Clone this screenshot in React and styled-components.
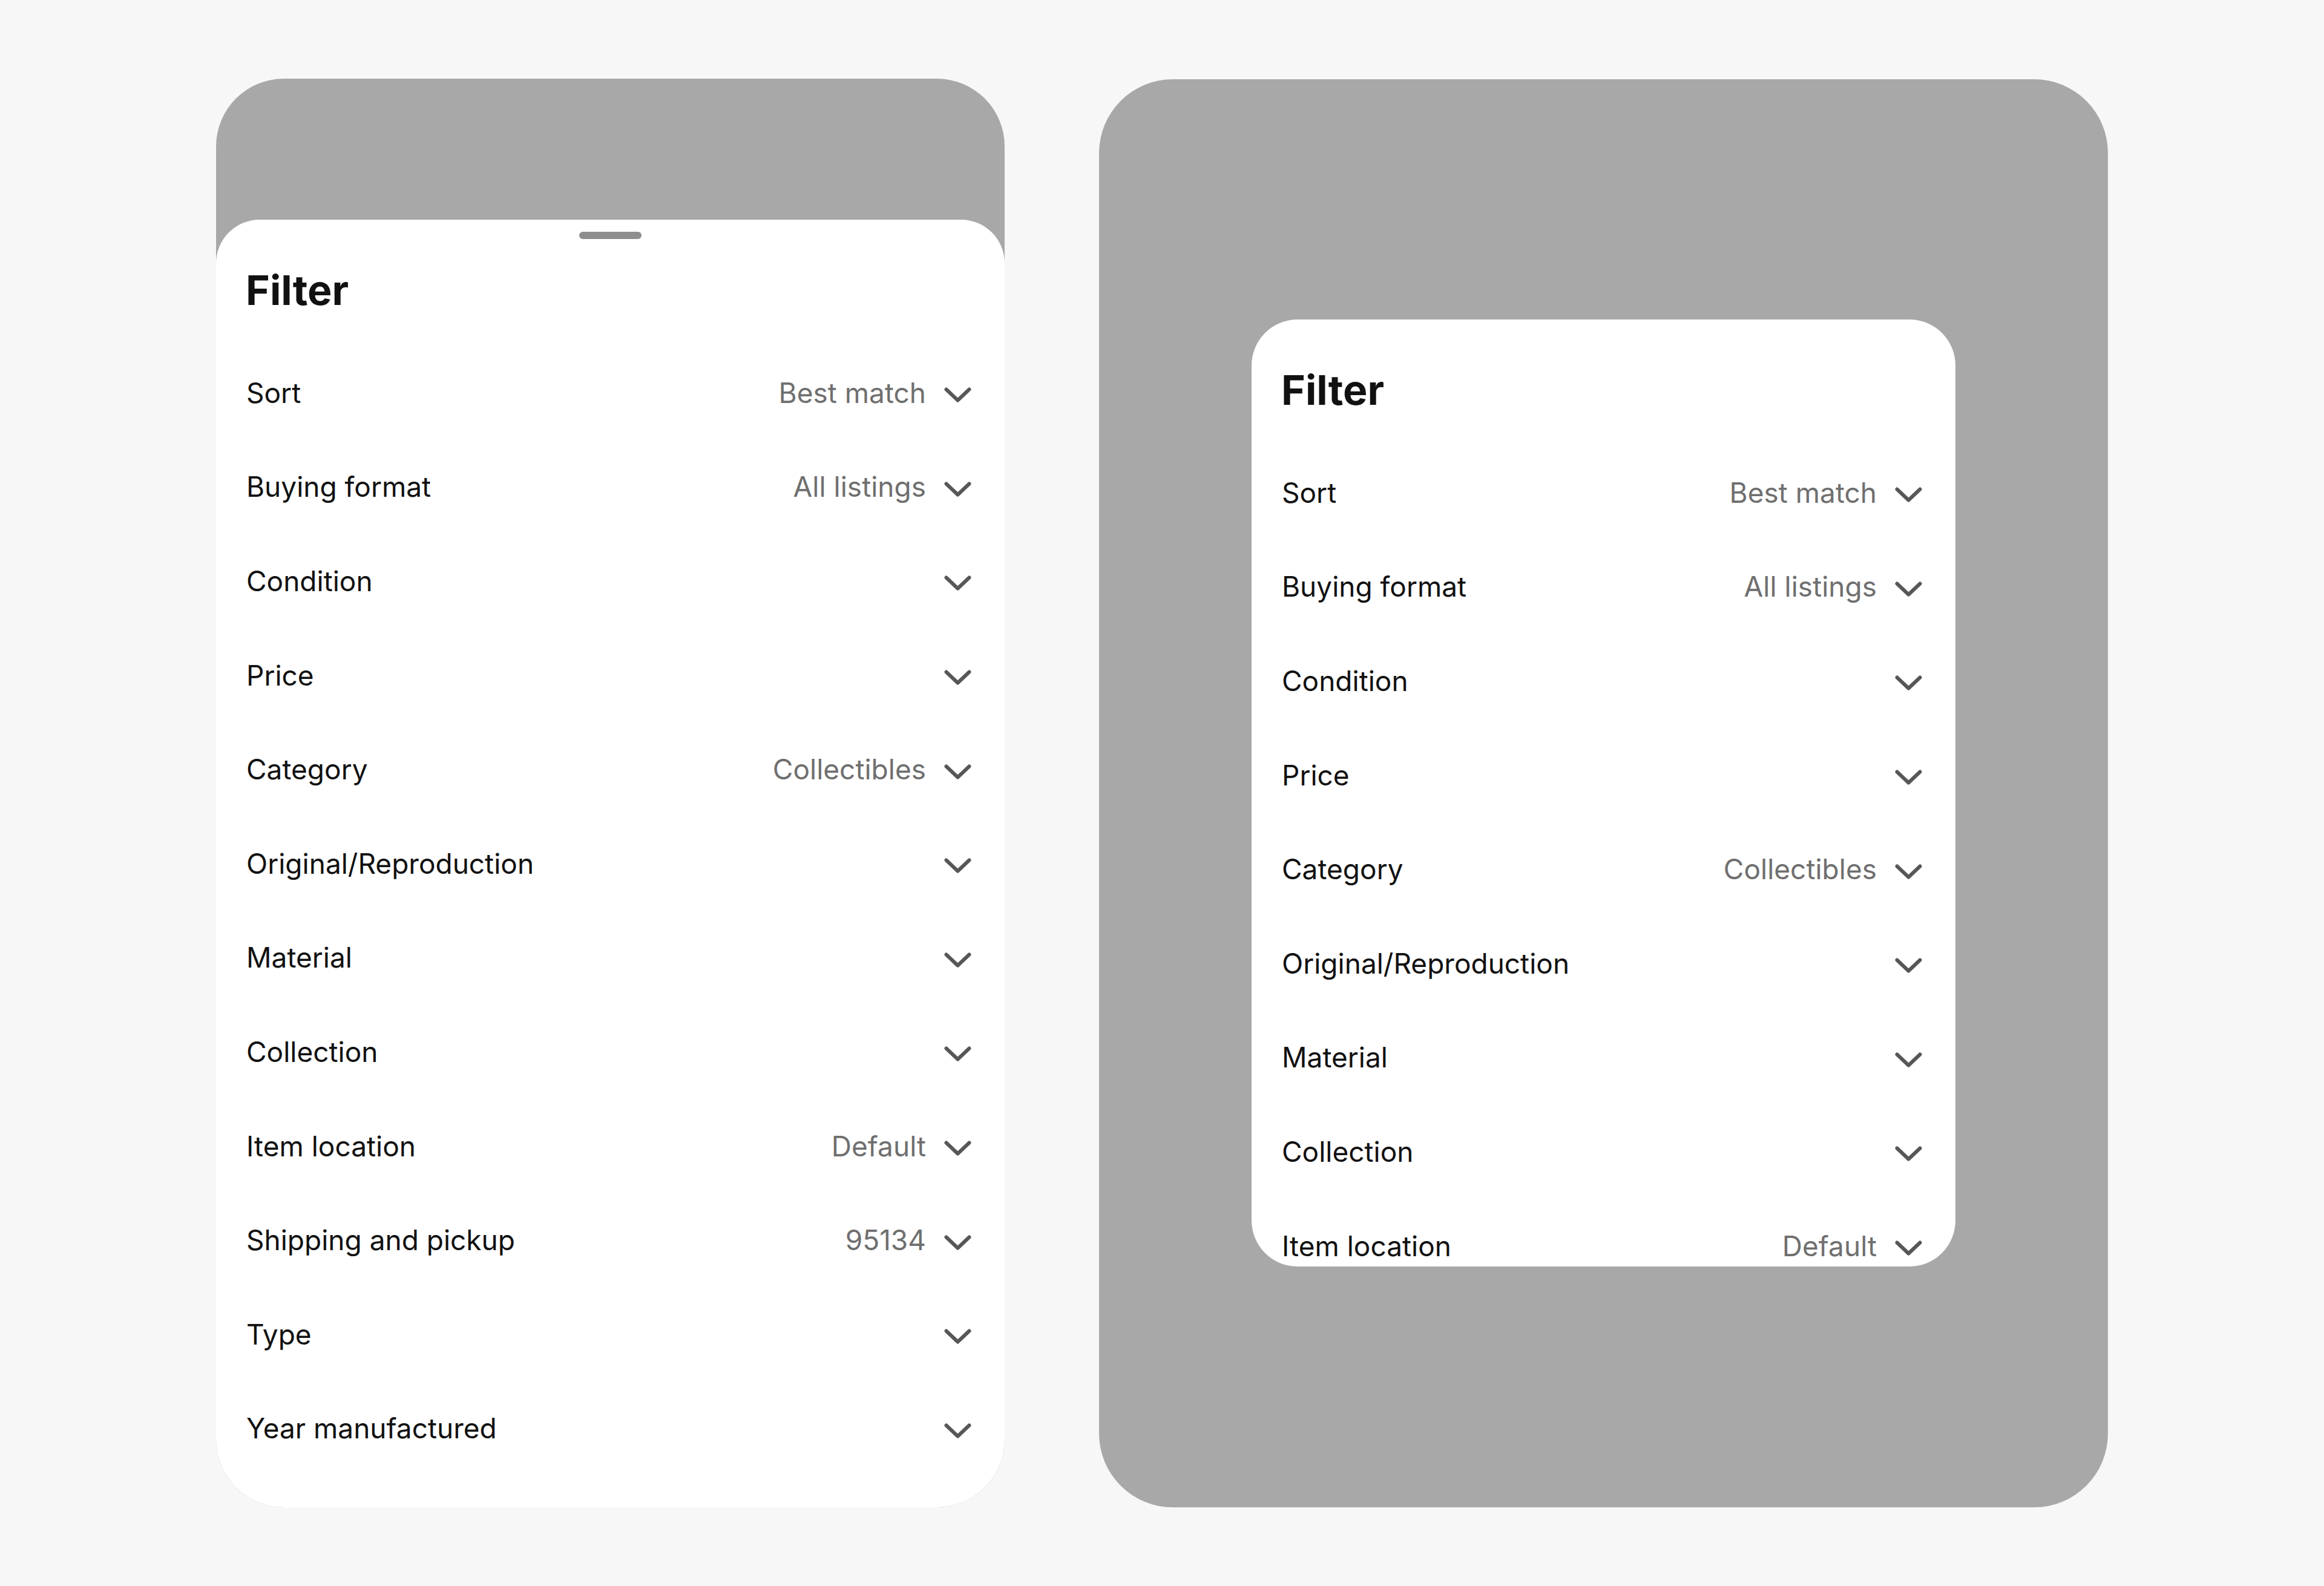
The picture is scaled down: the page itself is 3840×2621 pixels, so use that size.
import React from "react";
import styled, { createGlobalStyle } from "styled-components";

const GlobalStyle = createGlobalStyle`
  html, body {
    margin: 0;
    padding: 0;
    background: #f7f7f7;
  }
  body {
    font-family: Inter, "Noto Sans", "Liberation Sans", sans-serif;
    color: #111111;
    -webkit-font-smoothing: antialiased;
  }
  * { box-sizing: border-box; }
`;

const Stage = styled.main`
  display: flex;
  justify-content: center;
  align-items: center;
  gap: 156px;
  height: 2621px;
`;

const Phone = styled.section`
  width: 1303px;
  height: 2361px;
  border-radius: 112px;
  background: #a8a8a8;
  overflow: hidden;
  display: flex;
  flex-direction: column;
  padding-top: 233px;
`;

const Tablet = styled.section`
  width: 1667px;
  height: 2360px;
  border-radius: 122px;
  background: #a8a8a8;
  display: flex;
  align-items: center;
  justify-content: center;
`;

const Sheet = styled.div`
  flex: 1;
  background: #ffffff;
  border-radius: 72px 72px 0 0;
  display: flex;
  flex-direction: column;
`;

const Dialog = styled.div`
  width: 1163px;
  height: 1565px;
  background: #ffffff;
  border-radius: 76px;
  overflow: hidden;
  padding-top: 76px;
  display: flex;
  flex-direction: column;
`;

const Handle = styled.div`
  align-self: center;
  width: 103px;
  height: 12px;
  border-radius: 6px;
  background: #8e8e8e;
  margin: 20px 0 44px;
`;

const Title = styled.h2`
  margin: 0 0 52px;
  padding-left: 49px;
  font-size: 68px;
  line-height: 80px;
  font-weight: 700;
  letter-spacing: 0;
  color: #111111;
`;

const List = styled.ul`
  list-style: none;
  margin: 0;
  padding: 0 55px 0 50px;
`;

const Row = styled.li`
  display: flex;
  align-items: center;
  height: 155.6px;
  font-size: 46px;
`;

const Label = styled.span`
  flex: 1;
  color: #111111;
  white-space: nowrap;
`;

const Value = styled.span`
  color: #6f6f6f;
  margin-right: 30px;
  white-space: nowrap;
`;

const ChevronSvg = styled.svg`
  flex: none;
  width: 45px;
  height: 25px;
  margin-top: 8px;
`;

const Chevron = () => (
  <ChevronSvg viewBox="0 0 45 25" aria-hidden="true">
    <polyline
      points="3.5,3.5 22.5,21.5 41.5,3.5"
      fill="none"
      stroke="#575757"
      strokeWidth="6"
      strokeLinecap="round"
      strokeLinejoin="round"
    />
  </ChevronSvg>
);

const filters = [
  { label: "Sort", value: "Best match" },
  { label: "Buying format", value: "All listings" },
  { label: "Condition" },
  { label: "Price" },
  { label: "Category", value: "Collectibles" },
  { label: "Original/Reproduction" },
  { label: "Material" },
  { label: "Collection" },
  { label: "Item location", value: "Default" },
  { label: "Shipping and pickup", value: "95134" },
  { label: "Type" },
  { label: "Year manufactured" },
];

const FilterList = ({ items }) => (
  <List>
    {items.map((f) => (
      <Row key={f.label}>
        <Label>{f.label}</Label>
        {f.value && <Value>{f.value}</Value>}
        <Chevron />
      </Row>
    ))}
  </List>
);

export default function App() {
  return (
    <>
      <GlobalStyle />
      <Stage>
        <Phone>
          <Sheet>
            <Handle />
            <Title>Filter</Title>
            <FilterList items={filters} />
          </Sheet>
        </Phone>
        <Tablet>
          <Dialog>
            <Title>Filter</Title>
            <FilterList items={filters} />
          </Dialog>
        </Tablet>
      </Stage>
    </>
  );
}
